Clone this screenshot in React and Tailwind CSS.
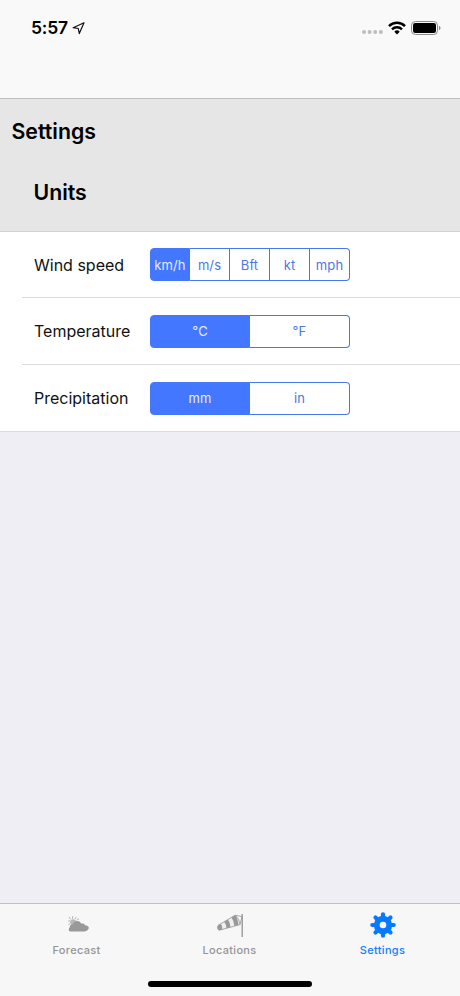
import { useState } from 'react';
import clsx from 'clsx';

const UNITS = [
  { label: 'Wind speed', options: ['km/h', 'm/s', 'Bft', 'kt', 'mph'] },
  { label: 'Temperature', options: ['°C', '°F'] },
  { label: 'Precipitation', options: ['mm', 'in'] },
];

function StatusBar() {
  return (
    <div className="flex h-[56px] items-center justify-between pl-[31px] pr-[19px]">
      <div className="flex items-center gap-1">
        <span className="text-[17.5px] font-semibold leading-none tracking-[-0.2px]">5:57</span>
        <svg className="h-[13px] w-[13px]" viewBox="0 0 13 13" fill="none" stroke="#111" strokeWidth="1.2" strokeLinejoin="round">
          <path d="M12 0.8L1.2 5.7L6.3 6.5L7.3 11.6Z" />
        </svg>
      </div>

      <div className="flex items-center">
        <svg className="mr-[5px] mt-[8px] h-[4px] w-[21px]" viewBox="0 0 21 4" fill="#bdbdbd">
          <circle cx="2" cy="2" r="2" />
          <circle cx="7.6" cy="2" r="2" />
          <circle cx="13.2" cy="2" r="2" />
          <circle cx="18.8" cy="2" r="2" />
        </svg>
        <svg className="h-[14px] w-[18px]" viewBox="0 0 18 14" fill="none" stroke="#000" strokeWidth="2.5">
          <path d="M1 5.1A11.4 11.4 0 0 1 17 5.1" />
          <path d="M4 8.3A7.1 7.1 0 0 1 14 8.3" />
          <path d="M9 13.4L6.3 10.7A3.8 3.8 0 0 1 11.7 10.7Z" fill="#000" stroke="none" />
        </svg>
        <svg className="ml-[5px] h-[14px] w-[30px]" viewBox="0 0 30 14">
          <rect x="0.5" y="0.5" width="26" height="13" rx="3.8" fill="none" stroke="#8a8a8a" />
          <rect x="2" y="2" width="23" height="10" rx="2.2" fill="#000" />
          <path d="M28 4.8Q29.6 5.5 29.6 7T28 9.2Z" fill="#8a8a8a" />
        </svg>
      </div>
    </div>
  );
}

function SegmentedControl({ options }) {
  const [selected, setSelected] = useState(options[0]);

  return (
    <div className="grid h-[33px] w-[200px] auto-cols-fr grid-flow-col">
      {options.map((option) => (
        <button
          key={option}
          onClick={() => setSelected(option)}
          className={clsx(
            'border-y border-r pt-[2px] text-[13px] tracking-[0.1px] first:rounded-l-[4px] first:border-l last:rounded-r-[4px]',
            selected === option
              ? 'border-[#4477f8] bg-[#4477ff] text-[#e6edff]'
              : 'border-[#4678e6] bg-white text-[#4c78e2]'
          )}
        >
          {option}
        </button>
      ))}
    </div>
  );
}

function ForecastIcon() {
  return (
    <svg className="h-[26px] w-[26px]" viewBox="0 0 26 26">
      <g stroke="#b0b0b0" strokeWidth="1" strokeLinecap="round">
        <path d="M8.6 4.6V6.4M5.4 5.4L6.4 7M12 5.4L11.2 6.8M14.6 7L13.2 7.9M4.6 9H6M4.8 12.4L6 11.6" />
      </g>
      <circle cx="9.2" cy="10.2" r="3" fill="#b8b8b8" />
      <path
        d="M6.2 19.4C4.6 19.2 4.2 16.4 5.8 15.2C5.6 13.2 7.2 12.2 8.8 12.2C10.2 8.6 15 7.8 17.4 11.7C19.2 11.4 20.6 12 21 13.2C22.8 13.2 24.8 14.4 24.8 15.8C24.8 17.5 22.4 19.4 20.6 19.4Z"
        fill="#999"
      />
    </svg>
  );
}

function WindsockIcon() {
  return (
    <svg className="h-[26px] w-[28px]" viewBox="0 0 28 26">
      <path d="M2.2 13.3L19.2 3.2Q23.4 6.6 24 12.6L3 18.3Q0.4 16.2 2.2 13.3Z" fill="#efefef" stroke="#a8a8a8" strokeWidth="1" />
      <path d="M2.2 13.3L4.8 11.8Q6.6 14 6.4 17.4L3 18.3Q0.4 16.2 2.2 13.3Z" fill="#999" />
      <path d="M8.2 9.7L12 7.5Q14.4 10.8 14.4 15.3L10.4 16.3Q10.4 12.6 8.2 9.7Z" fill="#999" />
      <path d="M15.4 5.5L19.2 3.2Q22 6.5 22.4 13L18.4 14.1Q18.2 9 15.4 5.5Z" fill="#999" />
      <path d="M19.2 3.2L26 4.6L24 12.6" fill="none" stroke="#a8a8a8" strokeWidth="1" />
      <path d="M26.2 2V25" stroke="#999" strokeWidth="1.4" />
    </svg>
  );
}

function GearIcon() {
  return (
    <svg className="h-[26px] w-[26px]" viewBox="-13 -13 26 26">
      <g stroke="#067aff" strokeWidth="4.2" strokeLinecap="round">
        <path d="M0 -10.7V10.7M-10.7 0H10.7M-7.5 -7.5L7.5 7.5M-7.5 7.5L7.5 -7.5" />
      </g>
      <circle r="9.2" fill="#067aff" />
      <circle r="3.3" fill="#f7f7f7" />
    </svg>
  );
}

const TABS = [
  { label: 'Forecast', icon: ForecastIcon },
  { label: 'Locations', icon: WindsockIcon },
  { label: 'Settings', icon: GearIcon },
];

function TabBar() {
  const [active, setActive] = useState('Settings');

  return (
    <nav className="flex h-[93px] flex-col border-t border-[#c2c2c4] bg-[#f7f7f7]">
      <div className="grid flex-1 grid-cols-[153px_153px_153px] items-start">
        {TABS.map(({ label, icon: Icon }) => (
          <button
            key={label}
            onClick={() => setActive(label)}
            className={clsx(
              'flex flex-col items-center gap-[5px] pt-[8px] text-[11px] font-medium tracking-[0.3px]',
              active === label ? 'text-[#147efb]' : 'text-[#959595]'
            )}
          >
            <Icon />
            <span className="leading-[14px]">{label}</span>
          </button>
        ))}
      </div>
      <div className="mx-auto mb-[9px] h-[6px] w-[164px] rounded-full bg-black" />
    </nav>
  );
}

function App() {
  return (
    <div className="flex h-screen flex-col bg-[#efeef4] font-['Inter','Liberation_Sans',sans-serif] text-black">
      <header className="h-[99px] border-b border-[#bdbdbd] bg-[#f9f9f9]">
        <StatusBar />
      </header>

      <main className="flex-1">
        <div className="h-[133px] border-b border-[#d2d2d4] bg-[#e6e6e6] pt-4 text-[21.3px] font-semibold">
          <h1 className="pl-[11.5px] leading-8">Settings</h1>
          <h2 className="pl-[33.5px] pt-[29px] leading-8">Units</h2>
        </div>

        <div className="border-b border-[#dcdcde] bg-white pl-[22px]">
          {UNITS.map(({ label, options }) => (
            <div
              key={label}
              className="flex h-[67px] items-center border-b border-[#dcdcde] pl-3 first:h-[66px] last:h-[66px] last:border-b-0"
            >
              <span className="w-[116px] text-[16px] text-[#111]">{label}</span>
              <SegmentedControl options={options} />
            </div>
          ))}
        </div>
      </main>

      <TabBar />
    </div>
  );
}

export default App;
